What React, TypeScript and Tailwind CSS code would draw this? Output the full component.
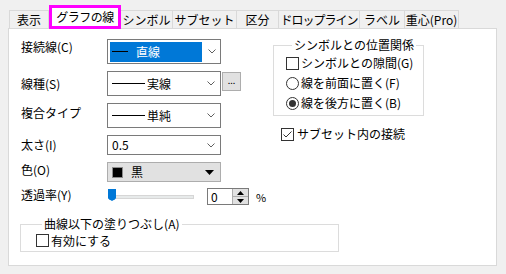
import React from 'react';

const Chevron = () => (
  <svg width="8" height="5" viewBox="0 0 8 5" className="shrink-0">
    <polyline points="0.5,0.5 4,4 7.5,0.5" fill="none" stroke="#606060" strokeWidth="1" />
  </svg>
);

const CheckBox = ({ checked = false }: { checked?: boolean }) => (
  <span className="w-[13px] h-[13px] border border-[#333333] bg-white shrink-0 flex items-center justify-center">
    {checked && (
      <svg width="11" height="11" viewBox="0 0 11 11">
        <polyline points="1.5,5.5 4,8 9.5,2.5" fill="none" stroke="#333333" strokeWidth="1" />
      </svg>
    )}
  </span>
);

const Radio = ({ checked = false }: { checked?: boolean }) => (
  <span className="w-[13px] h-[13px] rounded-full border border-[#333333] bg-white shrink-0 flex items-center justify-center">
    {checked && <span className="w-[7px] h-[7px] rounded-full bg-[#333333]" />}
  </span>
);

const tabs = [
  { label: 'シンボル', cls: 'w-[52px] border-l-0' },
  { label: 'サブセット', cls: 'w-[65px] -ml-px' },
  { label: '区分', cls: 'w-[43px] -ml-px' },
  { label: 'ドロップライン', cls: 'w-[82px] -ml-px tracking-[-1px]' },
  { label: 'ラベル', cls: 'w-[46px] -ml-px' },
  { label: '重心(Pro)', cls: 'w-[55px] -ml-px' },
];

export default function App() {
  return (
    <div className="w-[506px] h-[274px] bg-[#f0f0f0] pt-[5px] pl-[8px] text-[12px] leading-[16px] text-black font-['Noto_Sans_CJK_JP',sans-serif] overflow-hidden">
      {/* tab strip */}
      <div className="flex items-end h-[23px] pl-px whitespace-nowrap">
        <div className="w-[40px] h-[18px] border border-b-0 border-[#d9d9d9] bg-[#f0f0f0] flex items-center justify-center">表示</div>
        <div className="w-[72px] h-[24px] -mb-px relative z-10 border-[3px] border-[#ff00ff] bg-white flex items-center justify-center tracking-[-0.5px]">グラフの線</div>
        {tabs.map((t) => (
          <div key={t.label} className={`${t.cls} h-[18px] border border-b-0 border-[#d9d9d9] bg-[#f0f0f0] flex items-center justify-center overflow-hidden`}>
            {t.label}
          </div>
        ))}
      </div>

      {/* page */}
      <div className="w-[489px] h-[238px] border border-[#d9d9d9] bg-white pt-[8px] pl-[12px]">
        <div className="flex">
          {/* left column */}
          <div className="w-[252px] shrink-0 mt-[2px] flex flex-col">
            <div className="flex items-center h-[25px]">
              <span className="w-[86px] shrink-0 mb-[9px]">接続線(C)</span>
              <div className="w-[114px] h-[25px] border border-[#7a7a7a] bg-white flex items-center pl-[2px]">
                <div className="w-[92px] h-[20px] bg-[#0078d7] flex items-center pl-[2px] text-white">
                  <span className="w-[16px] h-px bg-black" />
                  <span className="ml-[8px]">直線</span>
                </div>
                <span className="ml-[6px] flex"><Chevron /></span>
              </div>
            </div>

            <div className="flex items-center h-[25px] mt-[7px]">
              <span className="w-[86px] shrink-0">線種(S)</span>
              <div className="w-[114px] h-[25px] border border-[#7a7a7a] bg-white flex items-center pl-[4px] pr-[5px]">
                <span className="w-[33px] h-px bg-black" />
                <span className="ml-[2px]">実線</span>
                <span className="flex-1" />
                <Chevron />
              </div>
              <div className="ml-px self-start mt-px w-[19px] h-[19px] border border-[#adadad] bg-[#e1e1e1] flex items-center justify-center text-[9px] leading-none pb-[2px]">...</div>
            </div>

            <div className="flex items-center h-[25px] mt-[7px]">
              <span className="w-[86px] shrink-0 mb-[5px]">複合タイプ</span>
              <div className="w-[114px] h-[25px] border border-[#7a7a7a] bg-white flex items-center pl-[4px] pr-[5px]">
                <span className="w-[33px] h-px bg-black" />
                <span className="ml-[2px]">単純</span>
                <span className="flex-1" />
                <Chevron />
              </div>
            </div>

            <div className="flex items-center h-[20px] mt-[7px]">
              <span className="w-[86px] shrink-0">太さ(I)</span>
              <div className="w-[114px] h-[20px] border border-[#7a7a7a] bg-white flex items-center pl-[4px] pr-[5px]">
                <span>0.5</span>
                <span className="flex-1" />
                <Chevron />
              </div>
            </div>

            <div className="flex items-center h-[20px] mt-[7px]">
              <span className="w-[86px] shrink-0 mb-[4px]">色(O)</span>
              <div className="w-[114px] h-[20px] border border-[#adadad] bg-[#e1e1e1] flex items-center pl-[4px] pr-[6px]">
                <span className="w-[11px] h-[11px] bg-black border border-[#8c8c8c]" />
                <span className="ml-[8px]">黒</span>
                <span className="flex-1" />
                <svg width="9" height="5" viewBox="0 0 9 5">
                  <polygon points="0,0 9,0 4.5,5" fill="#000000" />
                </svg>
              </div>
            </div>

            <div className="flex items-center h-[17px] mt-[6px]">
              <span className="w-[86px] shrink-0 mb-[4px]">透過率(Y)</span>
              <div className="w-[87px] h-[17px] relative flex items-center">
                <div className="w-[86px] h-[4px] ml-px bg-[#e7eaea] border border-[#d6d6d6]" />
                <svg width="8" height="12" viewBox="0 0 8 12" className="absolute left-px top-[1px]">
                  <path d="M0 0 H8 V8.5 Q8 9.5 7 10.3 L4 12 L1 10.3 Q0 9.5 0 8.5 Z" fill="#0078d7" />
                </svg>
              </div>
              <div className="ml-[13px] w-[42px] h-[17px] border border-[#7a7a7a] bg-white flex">
                <span className="flex-1 pl-[3px] leading-[15px]">0</span>
                <div className="w-[16px] flex flex-col bg-[#e1e1e1] border-l border-[#adadad]">
                  <div className="flex-1 flex items-center justify-center border-b border-[#adadad]">
                    <svg width="7" height="4" viewBox="0 0 7 4"><polygon points="3.5,0 7,4 0,4" fill="#000000" /></svg>
                  </div>
                  <div className="flex-1 flex items-center justify-center">
                    <svg width="7" height="4" viewBox="0 0 7 4"><polygon points="0,0 7,0 3.5,4" fill="#000000" /></svg>
                  </div>
                </div>
              </div>
              <span className="ml-[7px] text-[11px]">%</span>
            </div>
          </div>

          {/* right column */}
          <div className="flex flex-col">
            <fieldset className="w-[151px] border border-[#dcdcdc] pl-[12px] pb-[2px]">
              <legend className="ml-[6px] px-[2px]">シンボルとの位置関係</legend>
              <div className="flex items-center h-[20px]">
                <CheckBox />
                <span className="ml-[2px]">シンボルとの隙間(G)</span>
              </div>
              <div className="flex items-center h-[20px]">
                <Radio />
                <span className="ml-[2px]">線を前面に置く(F)</span>
              </div>
              <div className="flex items-center h-[20px]">
                <Radio checked />
                <span className="ml-[2px]">線を後方に置く(B)</span>
              </div>
            </fieldset>
            <div className="flex items-center h-[20px] mt-[8px] ml-[8px]">
              <CheckBox checked />
              <span className="ml-[3px]">サブセット内の接続</span>
            </div>
          </div>
        </div>

        {/* bottom group */}
        <fieldset className="mt-[11px] -ml-px w-[319px] border border-[#dcdcdc] pl-[15px] pb-[2px]">
          <legend className="ml-[6px] px-[2px]">曲線以下の塗りつぶし(A)</legend>
          <div className="flex items-center h-[17px]">
            <CheckBox />
            <span className="ml-[2px]">有効にする</span>
          </div>
        </fieldset>
      </div>
    </div>
  );
}
